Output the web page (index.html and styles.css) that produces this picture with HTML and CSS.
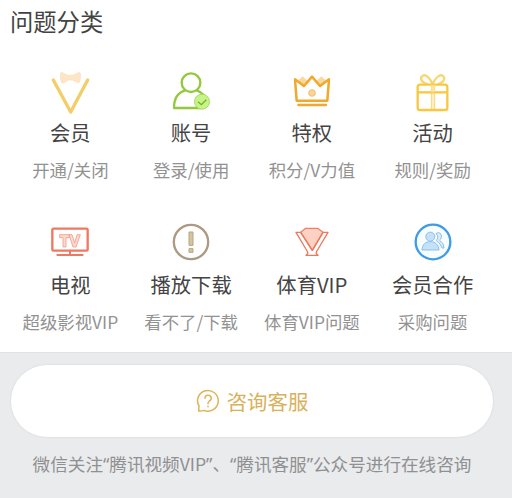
FILE: index.html
```html
<!DOCTYPE html>
<html lang="zh-CN">
<head>
<meta charset="utf-8">
<title>问题分类</title>
<link rel="stylesheet" href="styles.css">
</head>
<body>
<section class="categories">
  <h1 class="heading">问题分类</h1>
  <div class="grid">
    <a class="item">
      <svg class="icon" viewBox="1 0 180 180" fill="none">
        <path d="M41 60L93 156L144 60" stroke="#f3cd68" stroke-width="10" stroke-linecap="round" stroke-linejoin="round"/>
        <path d="M63 39Q66 36 70 39L85 46H99L116 38Q121 36 122 41Q124 54 119 66Q117 70 112 67L98 60H86L73 68Q67 71 65 66Q60 53 63 39Z" fill="#fce6c7" stroke="#fbdcb2" stroke-width="2"/>
      </svg>
      <span class="name">会员</span><span class="desc">开通/关闭</span>
    </a>
    <a class="item">
      <svg class="icon" viewBox="3 0 180 180" fill="none">
        <g stroke="#94c83d" stroke-width="7" stroke-linejoin="round">
          <circle cx="93" cy="68" r="28"/>
          <path d="M76 91C54 97 42 117 42 144H122M110 91Q124 96 132 106"/>
        </g>
        <circle cx="126" cy="125" r="22.500" fill="#c7f486" stroke="#a9d96a" stroke-width="3"/>
        <path d="M114 125L124 134L139 119" stroke="#74b12e" stroke-width="4"/>
      </svg>
      <span class="name">账号</span><span class="desc">登录/使用</span>
    </a>
    <a class="item">
      <svg class="icon" viewBox="0 0 180 180" fill="none">
        <path d="M50 60L62 49L76 62L64 78ZM104 62L118 49L130 60L116 78Z" fill="#fbd89d"/>
        <path d="M44 122L39 58L66 78L90 50L114 78L141 58L136 122Z" stroke="#f2a72d" stroke-width="7.500" stroke-linejoin="round" stroke-linecap="round"/>
        <circle cx="90" cy="99" r="10" fill="#fbd49a" stroke="#f6bd69" stroke-width="3"/>
        <path d="M49 135H132" stroke="#f2a72d" stroke-width="7" stroke-linecap="round"/>
      </svg>
      <span class="name">特权</span><span class="desc">积分/V力值</span>
    </a>
    <a class="item">
      <svg class="icon" viewBox="2 0 180 180" fill="none">
        <path d="M91 73C82 50 66 40 58 50C52 60 63 70 76 73M91 73C100 50 116 40 124 50C130 60 119 70 106 73" stroke="#f7d774" stroke-width="7"/>
        <path d="M88 76V149M96 76V149" stroke="#fbdc82" stroke-width="5"/>
        <rect x="46" y="74" width="89" height="76" rx="7" stroke="#f8c940" stroke-width="7"/>
        <path d="M46 97H135" stroke="#f8c940" stroke-width="7"/>
        <path d="M86 74H98V97H86Z" fill="#fbe19a" fill-opacity=".7"/>
      </svg>
      <span class="name">活动</span><span class="desc">规则/奖励</span>
    </a>
    <a class="item">
      <svg class="icon" viewBox="1 -3 180 180" fill="none">
        <rect x="38" y="47" width="106" height="66" rx="4" stroke="#f07860" stroke-width="7"/>
        <path d="M91 113V125M53 126H129" stroke="#f07860" stroke-width="6" stroke-linecap="round"/>
        <path d="M60 65H89V74H79V102H70V74H60ZM88 65H97L105 90L112 65H122L109 102H100Z" fill="#fdd9d0" stroke="#f49b88" stroke-width="2.500"/>
      </svg>
      <span class="name">电视</span><span class="desc">超级影视VIP</span>
    </a>
    <a class="item">
      <svg class="icon" viewBox="3 -3 180 180" fill="none">
        <circle cx="93" cy="87" r="51.500" stroke="#ad9a83" stroke-width="7"/>
        <path d="M87 57H99V97H87ZM87 107H99V118H87Z" fill="#d5c59f" stroke="#b6a386" stroke-width="3"/>
      </svg>
      <span class="name">播放下载</span><span class="desc">看不了/下载</span>
    </a>
    <a class="item">
      <svg class="icon" viewBox="0 -1 180 180" fill="none" stroke-linejoin="round">
        <path d="M56 60L71 48H107L123 60L91 114Z" fill="#fdd2c5" stroke="#ee8267" stroke-width="4"/>
        <path d="M42 60H56L91 114L123 60H138L103 119V124L108 129H72L77 124V119Z" stroke="#ee7a5d" stroke-width="4"/>
      </svg>
      <span class="name">体育VIP</span><span class="desc">体育VIP问题</span>
    </a>
    <a class="item">
      <svg class="icon" viewBox="2 -3 180 180" fill="none">
        <circle cx="92" cy="87" r="52" fill="#f7fcff" stroke="#3e9be8" stroke-width="7"/>
        <g stroke="#8dbfea" stroke-width="3" stroke-linejoin="round">
          <path d="M101 62Q107 56 114 61Q121 69 115 78Q111 80 113 83Q125 91 125 105H119Q115 91 102 83L106 76Q109 68 101 62Z" fill="#dceefd"/>
          <circle cx="84" cy="71" r="13.500" fill="#c5e1fa"/>
          <path d="M59 111C60 94 69 86 84 86S108 94 110 111Z" fill="#c5e1fa"/>
        </g>
      </svg>
      <span class="name">会员合作</span><span class="desc">采购问题</span>
    </a>
  </div>
</section>
<footer class="service">
  <a class="contact">
    <svg class="chat" viewBox="0 0 72 72" fill="none" stroke="#dcb45c" stroke-width="4.500" stroke-linecap="round" stroke-linejoin="round">
      <path d="M8 66L9 51A31 31 0 1 1 24 64Q16 67 8 66Z"/>
      <path d="M27 28Q27 19 36 19T46 28Q46 33 40 36Q36 39 36 44M36 52V53"/>
    </svg>
    <span>咨询客服</span>
  </a>
  <p class="note">微信关注“腾讯视频<span class="latin">VIP</span>”、“腾讯客服”公众号进行在线咨询</p>
</footer>
</body>
</html>
```

FILE: styles.css
```css
* { box-sizing: border-box; }
body {
  margin: 0;
  height: 498px;
  overflow: hidden;
  display: flex;
  flex-direction: column;
  background: #fff;
  font-family: "Noto Sans CJK SC", sans-serif;
  font-weight: 400;
}
.categories {
  height: 352px;
  padding: 4px 19px 0 10px;
}
.heading {
  margin: 0;
  font-size: 23.3px;
  line-height: 34px;
  font-weight: 400;
  color: #434343;
}
.grid {
  display: grid;
  grid-template-columns: repeat(4, 1fr);
  grid-auto-rows: 152px;
  padding-top: 22px;
}
.item {
  display: flex;
  flex-direction: column;
  align-items: center;
  white-space: nowrap;
}
.icon { width: 60px; height: 60px; flex: none; }
.name {
  margin-top: -2px;
  font-size: 20.3px;
  line-height: 28px;
  color: #444;
}
.desc {
  margin-top: 11px;
  font-size: 17.4px;
  line-height: 26px;
  color: #929292;
}
.service {
  flex: 1;
  padding: 12px 19px 0 11px;
  background: #eaebed;
  border-top: 1px solid #e2e2e3;
}
.contact {
  display: flex;
  align-items: center;
  justify-content: center;
  gap: 7px;
  height: 72px;
  border-radius: 36px;
  background: #fff;
  box-shadow: 0 0 1px 1px #e1e2e4;
  font-size: 20.4px;
  color: #d8b15b;
}
.chat { width: 24px; height: 24px; }
.note {
  margin: 14px 0 0;
  font-family: "Noto Sans", "Noto Sans CJK SC", sans-serif;
  font-size: 17.6px;
  line-height: 26px;
  text-align: center;
  white-space: nowrap;
  color: #8f9092;
}
.latin { font-family: "Noto Sans CJK SC", sans-serif; }
```
